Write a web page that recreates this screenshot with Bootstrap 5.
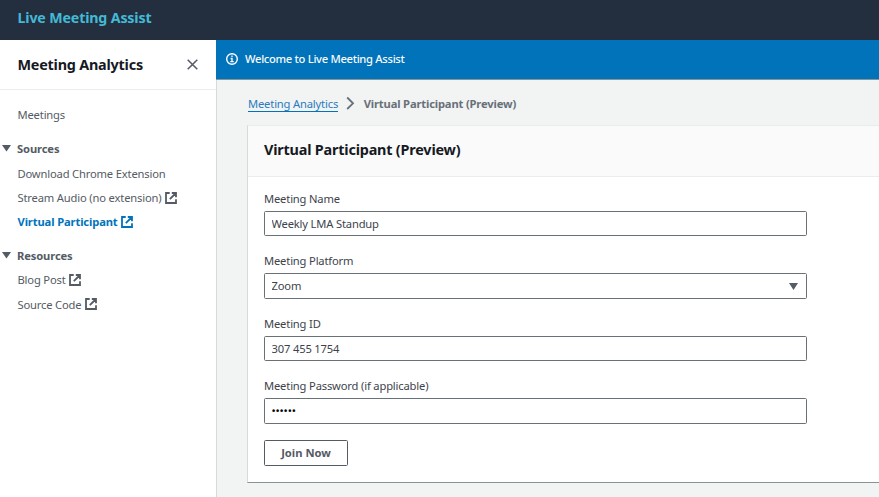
<!DOCTYPE html>
<html lang="en">
<head>
<meta charset="utf-8">
<meta name="viewport" content="width=device-width, initial-scale=1">
<title>Live Meeting Assist</title>
<link href="https://cdn.jsdelivr.net/npm/bootstrap@5.3.0/dist/css/bootstrap.min.css" rel="stylesheet">
<style>
body{font-family:"Noto Sans","Open Sans",sans-serif;font-size:11.2px;line-height:17.6px;letter-spacing:-.17px;color:#3d434c;background:#f2f3f3}
.topbar{height:40px;background:#232f3e;padding:0 17.5px 5px;font-size:14.2px;font-weight:700;letter-spacing:-.14px;color:#44b9d6}
.side{width:217px;border-right:1px solid #d5dbdb;color:#545b64}
.side-head{height:50px;border-bottom:1px solid #eaeded;padding:0 18px 0 17.5px;font-size:14.4px;font-weight:700;letter-spacing:-.22px;color:#16191f}
.side a{color:#545b64;text-decoration:none;height:24.2px;padding-left:17.5px;white-space:nowrap}
.side a.meetings{margin-top:13px}
.side a.current{color:#0073bb;font-weight:700;letter-spacing:-.13px}
.group-title{height:25px;padding-left:2px;font-weight:700;margin-top:9.2px;letter-spacing:-.13px}
.group-title svg{margin-right:6px}
.side a svg{margin-left:3.7px}
.flash{height:40px;background:#0073bb;border-bottom:1px solid #879596;color:#fafafa;padding:0 10px 1px;margin-left:-1px;font-weight:500;letter-spacing:-.3px}
.flash svg{margin-right:7px}
.crumbs{padding:16px 0 0 31px;height:45px}
.crumbs .home{color:#2a7bc0;border-bottom:1px solid #0073bb;text-decoration:none;line-height:15px;height:16px}
.crumbs .here{color:#687078;font-weight:700;letter-spacing:-.16px;line-height:16px;margin-left:.6px}
.panel{margin-left:30px;height:358px;border:1px solid #d5dbdb;border-top-color:#eaeded;border-right:0;border-bottom-color:#879596;background:#fff}
.panel-head{height:51px;background:#fafafa;border-bottom:1px solid #eaeded;padding:0 16px 3px;font-size:14.4px;font-weight:700;letter-spacing:-.19px;color:#16191f}
.panel-form{padding:13px 16px 0;width:575px}
.panel-form label{display:block;margin-bottom:3.2px;line-height:17.6px}
.panel-form .field{margin-bottom:16px}
.panel-form .form-control,.panel-form .form-select{height:25.6px;min-height:0;border:1px solid #687078;border-radius:1.6px;padding:0 6.5px;font-size:11.2px;line-height:17.6px;letter-spacing:-.17px;color:#3d434c;background-color:#fff}
.panel-form #pass{color:#000}
.panel-form .form-select{background-image:url("data:image/svg+xml,%3Csvg xmlns='http://www.w3.org/2000/svg' viewBox='0 0 9 7'%3E%3Cpath d='M0 0h9L4.5 7z' fill='%23545b64'/%3E%3C/svg%3E");background-size:9px 7px;background-position:right 8px top 9px}
.join{height:26px;width:84px;border:1px solid #545b64;border-radius:1.6px;padding:0;background:#fff;color:#545b64;font-size:11.2px;font-weight:700;line-height:17.6px;letter-spacing:0}
</style>
</head>
<body class="vh-100 overflow-hidden d-flex flex-column">
<svg class="d-none">
  <symbol id="external" viewBox="0 0 12 12"><path d="M4.7 1H1v10h10V7.3M6.8 1H11v4.2M11 1 4.8 7.2" fill="none" stroke="currentColor" stroke-width="1.8"/></symbol>
  <symbol id="caret" viewBox="0 0 9 7"><path d="M0 0h9L4.5 6.5z" fill="currentColor"/></symbol>
</svg>
<header class="topbar d-flex align-items-center flex-shrink-0">Live Meeting Assist</header>
<div class="d-flex flex-grow-1">
  <nav class="side bg-white flex-shrink-0">
    <div class="side-head d-flex align-items-center justify-content-between">
      <span>Meeting Analytics</span>
      <svg width="11" height="11" viewBox="0 0 11 11"><path d="M.7.7l9.6 9.6M10.3.7.7 10.3" stroke="#545b64" stroke-width="1.5"/></svg>
    </div>
    <a class="meetings d-flex align-items-center" href="#">Meetings</a>
    <div class="group-title d-flex align-items-center"><svg width="9" height="7"><use href="#caret"/></svg>Sources</div>
    <a class="d-flex align-items-center" href="#">Download Chrome Extension</a>
    <a class="d-flex align-items-center" href="#">Stream Audio (no extension)<svg width="12" height="12"><use href="#external"/></svg></a>
    <a class="d-flex align-items-center current" href="#">Virtual Participant<svg width="12" height="12"><use href="#external"/></svg></a>
    <div class="group-title d-flex align-items-center"><svg width="9" height="7"><use href="#caret"/></svg>Resources</div>
    <a class="d-flex align-items-center" href="#">Blog Post<svg width="12" height="12"><use href="#external"/></svg></a>
    <a class="d-flex align-items-center" href="#">Source Code<svg width="12" height="12"><use href="#external"/></svg></a>
  </nav>
  <main class="flex-grow-1">
    <div class="flash d-flex align-items-center">
      <svg width="12" height="12" viewBox="0 0 12 12" fill="none" stroke="#fff"><circle cx="6" cy="6" r="5.3" stroke-width="1.4"/><path d="M6 2.6v1.5M4.6 5.5H6v3M4.3 8.7h3.4" stroke-width="1.3"/></svg>
      <span>Welcome to Live Meeting Assist</span>
    </div>
    <div class="crumbs d-flex">
      <a class="home" href="#">Meeting Analytics</a>
      <svg class="mx-2" width="9" height="14" viewBox="0 0 9 14"><path d="M1.2 1.5 7 7.3 1.2 13" fill="none" stroke="#687078" stroke-width="1.8"/></svg>
      <span class="here">Virtual Participant (Preview)</span>
    </div>
    <section class="panel">
      <div class="panel-head d-flex align-items-center">Virtual Participant (Preview)</div>
      <form class="panel-form">
        <div class="field"><label for="name">Meeting Name</label><input id="name" class="form-control" value="Weekly LMA Standup"></div>
        <div class="field"><label for="platform">Meeting Platform</label><select id="platform" class="form-select"><option>Zoom</option></select></div>
        <div class="field"><label for="mid">Meeting ID</label><input id="mid" class="form-control" value="307 455 1754"></div>
        <div class="field"><label for="pass">Meeting Password (if applicable)</label><input id="pass" type="password" class="form-control" value="123456"></div>
        <button type="button" class="btn join">Join Now</button>
      </form>
    </section>
  </main>
</div>
<script src="https://cdn.jsdelivr.net/npm/bootstrap@5.3.0/dist/js/bootstrap.bundle.min.js"></script>
</body>
</html>
